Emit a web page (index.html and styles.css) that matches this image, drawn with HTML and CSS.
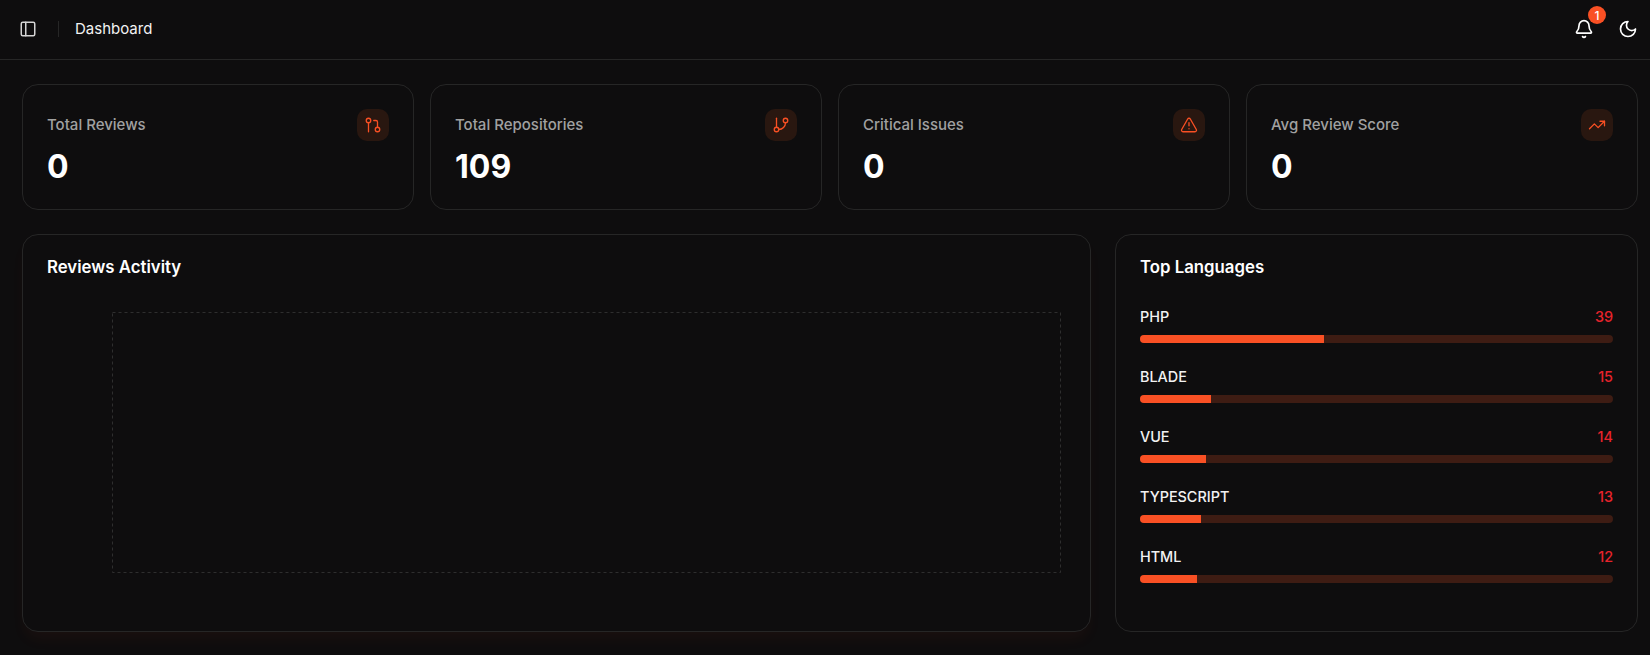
FILE: index.html
```html
<!DOCTYPE html>
<html lang="en">
<head>
    <meta charset="UTF-8">
    <meta name="viewport" content="width=device-width, initial-scale=1.0">
    <title>Dashboard</title>
    <link rel="stylesheet" href="styles.css">
</head>
<body>
    <header class="topbar">
        <div class="topbar-left">
            <svg class="icon" width="18" height="18" viewBox="0 0 24 24"><rect x="3" y="3" width="18" height="18" rx="2"/><path d="M9 3v18"/></svg>
            <span class="divider"></span>
            <span class="page-title">Dashboard</span>
        </div>
        <div class="topbar-right">
            <div class="bell">
                <svg class="icon" width="20" height="20" viewBox="0 0 24 24"><path d="M10.27 21a2 2 0 0 0 3.46 0"/><path d="M3.26 15.33A1 1 0 0 0 4 17h16a1 1 0 0 0 .74-1.67C19.41 13.96 18 12.5 18 8A6 6 0 0 0 6 8c0 4.5-1.41 5.96-2.74 7.33"/></svg>
                <span class="badge">1</span>
            </div>
            <svg class="icon" width="20" height="20" viewBox="0 0 24 24"><path d="M12 3a6 6 0 0 0 9 9 9 9 0 1 1-9-9Z"/></svg>
        </div>
    </header>

    <main class="content">
        <section class="stats">
            <div class="card stat">
                <div>
                    <div class="stat-label">Total Reviews</div>
                    <div class="stat-value">0</div>
                </div>
                <div class="chip">
                    <svg class="icon" width="18" height="18" viewBox="0 0 24 24"><circle cx="18" cy="18" r="3"/><circle cx="6" cy="6" r="3"/><path d="M13 6h3a2 2 0 0 1 2 2v7"/><path d="M6 9v12"/></svg>
                </div>
            </div>
            <div class="card stat">
                <div>
                    <div class="stat-label">Total Repositories</div>
                    <div class="stat-value">109</div>
                </div>
                <div class="chip">
                    <svg class="icon" width="18" height="18" viewBox="0 0 24 24"><path d="M6 3v12"/><circle cx="18" cy="6" r="3"/><circle cx="6" cy="18" r="3"/><path d="M18 9a9 9 0 0 1-9 9"/></svg>
                </div>
            </div>
            <div class="card stat">
                <div>
                    <div class="stat-label">Critical Issues</div>
                    <div class="stat-value">0</div>
                </div>
                <div class="chip">
                    <svg class="icon" width="18" height="18" viewBox="0 0 24 24"><path d="m21.73 18-8-14a2 2 0 0 0-3.48 0l-8 14A2 2 0 0 0 4 21h16a2 2 0 0 0 1.73-3"/><path d="M12 9v4"/><path d="M12 17h.01"/></svg>
                </div>
            </div>
            <div class="card stat">
                <div>
                    <div class="stat-label">Avg Review Score</div>
                    <div class="stat-value">0</div>
                </div>
                <div class="chip">
                    <svg class="icon" width="18" height="18" viewBox="0 0 24 24"><path d="M16 7h6v6"/><path d="m22 7-8.5 8.5-5-5L2 17"/></svg>
                </div>
            </div>
        </section>

        <section class="panels">
            <div class="card activity">
                <h2 class="card-title">Reviews Activity</h2>
                <svg class="chart" width="949" height="261"><rect x="0.5" y="0.5" width="948" height="260"/></svg>
            </div>
            <div class="card languages">
                <h2 class="card-title">Top Languages</h2>
                <div class="lang-list">
                    <div class="lang">
                        <div class="lang-row"><span>PHP</span><span class="lang-count">39</span></div>
                        <div class="track"><div class="fill" style="width: 39%"></div></div>
                    </div>
                    <div class="lang">
                        <div class="lang-row"><span>BLADE</span><span class="lang-count">15</span></div>
                        <div class="track"><div class="fill" style="width: 15%"></div></div>
                    </div>
                    <div class="lang">
                        <div class="lang-row"><span>VUE</span><span class="lang-count">14</span></div>
                        <div class="track"><div class="fill" style="width: 14%"></div></div>
                    </div>
                    <div class="lang">
                        <div class="lang-row"><span>TYPESCRIPT</span><span class="lang-count">13</span></div>
                        <div class="track"><div class="fill" style="width: 13%"></div></div>
                    </div>
                    <div class="lang">
                        <div class="lang-row"><span>HTML</span><span class="lang-count">12</span></div>
                        <div class="track"><div class="fill" style="width: 12%"></div></div>
                    </div>
                </div>
            </div>
        </section>
    </main>
</body>
</html>
```

FILE: styles.css
```css
* {
    box-sizing: border-box;
}
body {
    margin: 0;
    height: 655px;
    overflow: hidden;
    background-color: #0e0d0e;
    color: #fff;
    font-family: Inter, "Liberation Sans", sans-serif;
}
.icon {
    display: block;
    fill: none;
    stroke: currentColor;
    stroke-width: 2;
    stroke-linecap: round;
    stroke-linejoin: round;
}
.topbar {
    height: 60px;
    display: flex;
    align-items: center;
    justify-content: space-between;
    padding: 0 12px 1px 19px;
    border-bottom: 1px solid #262626;
}
.topbar-left {
    display: flex;
    align-items: center;
    color: #d4d4d4;
}
.divider {
    width: 1px;
    height: 16px;
    margin: 0 16px 0 21px;
    background-color: #262626;
}
.page-title {
    margin-bottom: 2px;
    font-size: 15px;
    font-weight: 400;
    color: #f2f2f2;
}
.topbar-right {
    display: flex;
    align-items: center;
    gap: 24px;
}
.bell {
    position: relative;
}
.badge {
    position: absolute;
    top: -13px;
    left: 14px;
    width: 18px;
    height: 18px;
    border-radius: 50%;
    display: flex;
    align-items: center;
    justify-content: center;
    background-color: #f95024;
    font-size: 12px;
    font-weight: 500;
}
.content {
    padding: 24px 12px 0 22px;
}
.card {
    background-color: #0e0d0e;
    border: 1px solid #262626;
    border-radius: 16px;
    padding: 24px;
}
.stats {
    display: grid;
    grid-template-columns: repeat(4, 1fr);
    gap: 16px;
}
.stat {
    height: 126px;
    display: flex;
    justify-content: space-between;
}
.stat-label {
    margin-top: 6px;
    font-size: 15px;
    font-weight: 500;
    line-height: 20px;
    color: #a1a1a1;
}
.stat-value {
    margin-top: 14px;
    font-size: 32px;
    font-weight: 700;
    line-height: 36px;
}
.chip {
    width: 32px;
    height: 32px;
    border-radius: 10px;
    display: flex;
    align-items: center;
    justify-content: center;
    background-color: #291710;
    color: #f95024;
}
.chip .icon {
    stroke-width: 1.75;
}
.panels {
    display: grid;
    grid-template-columns: 1fr 523px;
    gap: 24px;
    margin-top: 24px;
}
.activity,
.languages {
    height: 398px;
}
.activity {
    box-shadow: 0 10px 15px -3px rgba(249, 80, 36, 0.05);
}
.card-title {
    margin: -2px 0 0;
    font-size: 16.8px;
    font-weight: 600;
    line-height: 20px;
}
.chart {
    display: block;
    margin: 35px 0 0 65px;
}
.chart rect {
    fill: none;
    stroke: #2e2e2e;
    stroke-dasharray: 3 3;
}
.lang-list {
    margin-top: 30px;
}
.lang {
    margin-bottom: 24px;
}
.lang-row {
    display: flex;
    justify-content: space-between;
    font-size: 14.4px;
    font-weight: 500;
    line-height: 20px;
    margin-bottom: 8px;
    color: #f2f2f2;
}
.lang-count {
    color: #e7232b;
}
.track {
    height: 8px;
    border-radius: 4px;
    overflow: hidden;
    background-color: #3e1c13;
}
.fill {
    height: 100%;
    background-color: #f95024;
}
```
